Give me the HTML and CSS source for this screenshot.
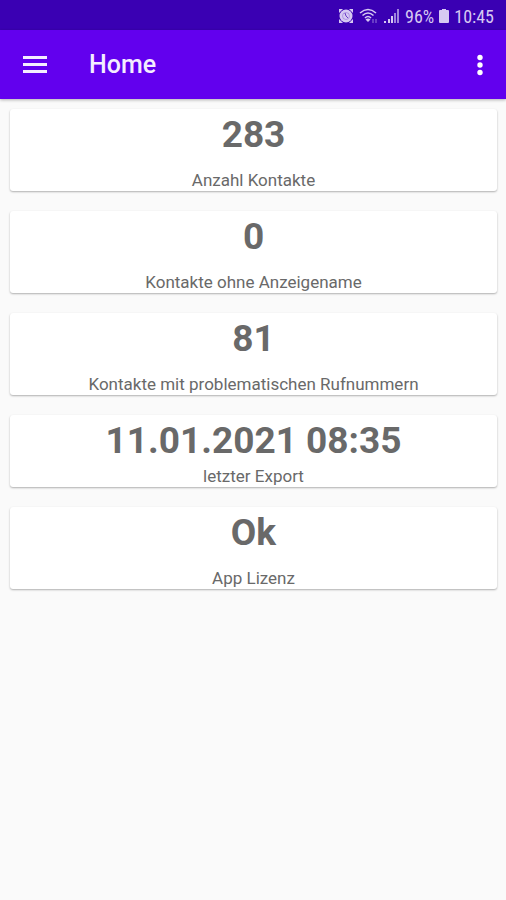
FILE: index.html
```html
<!DOCTYPE html>
<html lang="de">
<head>
    <meta charset="UTF-8">
    <meta name="viewport" content="width=device-width, initial-scale=1.0">
    <title>Home</title>
    <link rel="stylesheet" href="styles.css">
</head>
<body>

    <div class="status">
        <svg width="16" height="16" viewBox="0 0 16 16">
            <path d="M1 1h4l-4 4zM15 1h-4l4 4zM1 15v-4l4 4zM15 15v-4l-4 4z" fill="currentColor"/>
            <circle cx="8" cy="8" r="6.500" fill="currentColor"/>
            <circle cx="8" cy="8" r="3.500" fill="none" stroke="#3a00b3" stroke-opacity="0.25"/>
            <path d="M7 5l1 3 2 2" fill="none" stroke="#3a00b3" stroke-opacity="0.7"/>
        </svg>
        <svg width="20" height="16" viewBox="0 0 20 16">
            <g fill="none" stroke="currentColor" stroke-width="1.6">
                <path d="M1 5q8-7 16 0"/>
                <path d="M3.500 7.500q5.500-5 11 0"/>
                <path d="M6 10q3-3 6 0"/>
            </g>
            <path d="M6.500 11.500q2.500-2 5 0L9 14z" fill="currentColor"/>
            <path d="M14 11v4M17 11v4" stroke="currentColor" stroke-opacity="0.4" stroke-width="1.5"/>
        </svg>
        <svg width="16" height="16" viewBox="0 0 16 16">
            <path d="M0 13h2v2H0zM4 11h2v4H4zM7 8h2v7H7z" fill="currentColor"/>
            <path d="M10 5h2v10h-2zM13 1h2v14h-2z" fill="currentColor" fill-opacity="0.65"/>
        </svg>
        <span>96%</span>
        <svg width="10" height="16" viewBox="0 0 10 16">
            <path d="M3 1h4v1h2q1 0 1 1v11q0 1-1 1H1q-1 0-1-1V3q0-1 1-1h2z" fill="currentColor"/>
        </svg>
        <span>10:45</span>
    </div>

    <header class="bar">
        <button class="icon" aria-label="Menü">
            <svg width="24" height="20" viewBox="0 0 24 20">
                <path d="M0 2.500h24M0 9.500h24M0 16.500h24" stroke="currentColor" stroke-width="3"/>
            </svg>
        </button>
        <h1>Home</h1>
        <button class="icon more" aria-label="Mehr">
            <svg width="6" height="22" viewBox="0 0 6 22">
                <g fill="currentColor">
                    <circle cx="3" cy="3.500" r="2.700"/>
                    <circle cx="3" cy="11" r="2.700"/>
                    <circle cx="3" cy="18.500" r="2.700"/>
                </g>
            </svg>
        </button>
    </header>

    <main>
        <section class="card">
            <div class="value">283</div>
            <div class="label">Anzahl Kontakte</div>
        </section>
        <section class="card">
            <div class="value">0</div>
            <div class="label">Kontakte ohne Anzeigename</div>
        </section>
        <section class="card">
            <div class="value">81</div>
            <div class="label">Kontakte mit problematischen Rufnummern</div>
        </section>
        <section class="card tight">
            <div class="value">11.01.2021 08:35</div>
            <div class="label">letzter Export</div>
        </section>
        <section class="card">
            <div class="value">Ok</div>
            <div class="label">App Lizenz</div>
        </section>
    </main>

</body>
</html>
```

FILE: styles.css
```css
body {
    margin: 0;
    background-color: #fafafa;
    color: #696969;
    font-family: Roboto, sans-serif;
}

.status {
    display: flex;
    align-items: center;
    justify-content: flex-end;
    gap: 5px;
    height: 30px;
    padding: 2px 12px 0 12px;
    box-sizing: border-box;
    background-color: #3a00b3;
    color: #d6c9f2;
    font-family: "Roboto Condensed", Roboto, sans-serif;
    font-size: 18px;
}

.bar {
    display: flex;
    align-items: center;
    height: 69px;
    padding: 0 13px;
    background-color: #6200ee;
    color: #f4edff;
    box-shadow: 0 1px 3px rgba(0, 0, 0, 0.3);
}

.bar h1 {
    flex: 1;
    margin: 0 0 0 32px;
    font-size: 25px;
    font-weight: 500;
}

.icon {
    display: flex;
    padding: 10px;
    border: none;
    background: none;
    color: inherit;
}

.more {
    color: white;
}

main {
    display: flex;
    flex-direction: column;
    gap: 20px;
    padding: 10px 9px 10px 10px;
}

.card {
    padding-bottom: 1px;
    border-radius: 3px;
    background-color: white;
    text-align: center;
    box-shadow: 0 1px 2px rgba(0, 0, 0, 0.3);
}

.value {
    margin-bottom: 9px;
    font-size: 37px;
    font-weight: bold;
    line-height: 52px;
}

.tight .value {
    margin-bottom: -1px;
}

.label {
    font-size: 17px;
    line-height: 20px;
}
```
